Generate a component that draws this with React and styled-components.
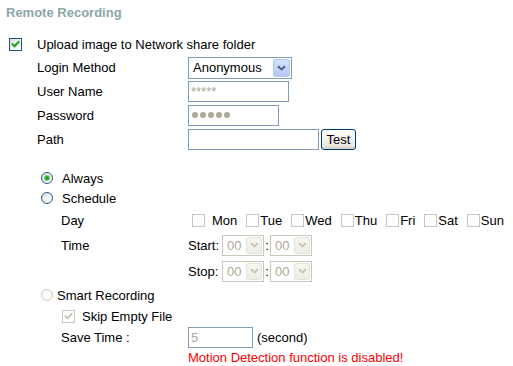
import React from 'react';
import styled, { createGlobalStyle } from 'styled-components';

const Global = createGlobalStyle`
  html, body { margin: 0; padding: 0; background: #fff; }
  body { font-family: "Liberation Sans", Arial, sans-serif; font-size: 13px; color: #000; }
`;

const Page = styled.div`
  width: 513px;
  height: 366px;
  overflow: hidden;
  background: #fff;
`;

const Title = styled.div`
  height: 33px;
  box-sizing: border-box;
  padding: 5px 0 0 6px;
  font-weight: bold;
  font-size: 13px;
  line-height: 16px;
  color: #8ca6a7;
`;

const Row = styled.div`
  display: flex;
  align-items: center;
  height: ${(p) => p.$h}px;
  padding-left: ${(p) => p.$indent || 0}px;
  box-sizing: border-box;
  white-space: nowrap;
  line-height: 15px;
`;

const Label = styled.span`
  flex: none;
  width: ${(p) => (p.$w ? `${p.$w}px` : 'auto')};
  margin-left: ${(p) => p.$ml || 0}px;
  color: ${(p) => p.$color || '#000'};
`;

const Box = styled.span`
  flex: none;
  width: 13px;
  height: 13px;
  box-sizing: border-box;
  border: 1px solid ${(p) => (p.$disabled ? '#cac8bb' : '#1c5180')};
  background: ${(p) =>
    p.$disabled ? '#fff' : 'linear-gradient(135deg, #dcdcd5 0%, #f3f3ef 55%, #ffffff 100%)'};
  display: flex;
  align-items: center;
  justify-content: center;
  margin-left: ${(p) => p.$ml || 0}px;
  margin-right: ${(p) => p.$mr || 0}px;
`;

const Check = ({ color }) => (
  <svg width="11" height="11" viewBox="0 0 11 11">
    <path d="M2.5 5.2 L4.5 7.3 L8.6 3" fill="none" stroke={color} strokeWidth="2" strokeLinecap="square" />
  </svg>
);

const CheckBox = ({ checked, disabled, ml, mr }) => (
  <Box $disabled={disabled} $ml={ml} $mr={mr}>
    {checked && <Check color={disabled ? '#cac8bb' : '#21a121'} />}
  </Box>
);

const RadioRing = styled.span`
  flex: none;
  width: 12px;
  height: 12px;
  border-radius: 50%;
  box-sizing: border-box;
  border: 1px solid ${(p) => (p.$disabled ? '#cfcdc2' : '#2c5a86')};
  background: ${(p) =>
    p.$disabled ? '#fbfbf9' : 'radial-gradient(circle at 70% 70%, #ffffff 0%, #eeeeea 55%, #d6d6ce 100%)'};
  display: flex;
  align-items: center;
  justify-content: center;
`;

const RadioDot = styled.span`
  width: 4px;
  height: 4px;
  border-radius: 50%;
  background: #24a324;
  box-shadow: 0 0 0 1px #74cf6f;
`;

const Radio = ({ checked, disabled }) => (
  <RadioRing $disabled={disabled}>{checked && <RadioDot />}</RadioRing>
);

const SelectBox = styled.div`
  flex: none;
  width: ${(p) => p.$w}px;
  height: ${(p) => p.$h}px;
  box-sizing: border-box;
  border: 1px solid ${(p) => (p.$disabled ? '#c9c7ba' : '#7f9db9')};
  background: #fff;
  padding: 1px;
  display: flex;
  align-items: stretch;
  color: ${(p) => (p.$disabled ? '#aca899' : '#000')};
`;

const SelectText = styled.span`
  flex: 1;
  padding-left: ${(p) => p.$pl}px;
  display: flex;
  align-items: center;
`;

const ArrowBtn = styled.span`
  flex: none;
  width: ${(p) => p.$w}px;
  box-sizing: border-box;
  border: 1px solid ${(p) => (p.$disabled ? '#e6e4da' : '#b5c8f2')};
  border-radius: 2px;
  background: ${(p) =>
    p.$disabled
      ? 'linear-gradient(#f6f5f1, #eeede7)'
      : 'linear-gradient(#d6e2fc 0%, #c3d4fb 50%, #b4c8f6 100%)'};
  display: flex;
  align-items: center;
  justify-content: center;
`;

const Chevron = ({ color }) => (
  <svg width="9" height="6" viewBox="0 0 9 6">
    <path d="M1 1.2 L4.5 4.5 L8 1.2" fill="none" stroke={color} strokeWidth="2" />
  </svg>
);

const Select = ({ value, w, h, disabled, pl = 3, btn = 17 }) => (
  <SelectBox $w={w} $h={h} $disabled={disabled}>
    <SelectText $pl={pl}>{value}</SelectText>
    <ArrowBtn $w={btn} $disabled={disabled}>
      <Chevron color={disabled ? '#c9c7ba' : '#4d6185'} />
    </ArrowBtn>
  </SelectBox>
);

const TextInput = styled.input`
  flex: none;
  width: ${(p) => p.$w}px;
  height: 21px;
  box-sizing: border-box;
  margin: 0;
  padding: 0 2px;
  border: 1px solid #7f9db9;
  background: #fff;
  font: 13px "Liberation Sans", Arial, sans-serif;
  color: ${(p) => (p.$muted ? '#aca899' : '#000')};
  outline: none;
`;

const PasswordField = styled.div`
  flex: none;
  width: ${(p) => p.$w}px;
  height: 21px;
  box-sizing: border-box;
  border: 1px solid #7f9db9;
  background: #fff;
  display: flex;
  align-items: center;
  gap: 2px;
  padding-left: 3px;
`;

const Dot = styled.span`
  width: 6px;
  height: 6px;
  border-radius: 50%;
  background: #aca899;
`;

const Button = styled.button`
  flex: none;
  width: 35px;
  height: 21px;
  margin: 0 0 0 2px;
  padding: 0;
  box-sizing: border-box;
  border: 1px solid #003c74;
  border-radius: 3px;
  background: linear-gradient(#ffffff 0%, #f5f4f0 45%, #e9e8e1 80%, #d6d0c5 100%);
  font: 13px "Liberation Sans", Arial, sans-serif;
  color: #000;
  line-height: 17px;
`;

const Days = styled.div`
  display: flex;
  align-items: center;
  gap: 9px;
  margin-left: 4px;
`;

const DayItem = styled.span`
  display: flex;
  align-items: center;
`;

const Colon = styled.span`
  width: 6px;
  text-align: center;
`;

const Note = styled.span`
  color: #ff0000;
`;

const days = ['Mon', 'Tue', 'Wed', 'Thu', 'Fri', 'Sat', 'Sun'];

const TimeSelects = () => (
  <>
    <Select value="00" w={42} h={21} disabled pl={3} btn={16} />
    <Colon>:</Colon>
    <Select value="00" w={42} h={21} disabled pl={3} btn={16} />
  </>
);

export default function App() {
  return (
    <Page>
      <Global />
      <Title>Remote Recording</Title>

      <Row $h={23} $indent={9}>
        <CheckBox checked />
        <Label $ml={15}>Upload image to Network share folder</Label>
      </Row>
      <Row $h={23} $indent={37}>
        <Label $w={151}>Login Method</Label>
        <Select value="Anonymous" w={104} h={22} />
      </Row>
      <Row $h={24} $indent={37}>
        <Label $w={151}>User Name</Label>
        <TextInput $w={101} $muted readOnly value="*****" />
      </Row>
      <Row $h={24} $indent={37}>
        <Label $w={151}>Password</Label>
        <PasswordField $w={91} aria-label="Password">
          <Dot />
          <Dot />
          <Dot />
          <Dot />
          <Dot />
        </PasswordField>
      </Row>
      <Row $h={24} $indent={37}>
        <Label $w={151}>Path</Label>
        <TextInput $w={131} readOnly value="" />
        <Button>Test</Button>
      </Row>

      <Row $h={17} />

      <Row $h={20} $indent={41}>
        <Radio checked />
        <Label $ml={9}>Always</Label>
      </Row>
      <Row $h={20} $indent={41}>
        <Radio />
        <Label $ml={9}>Schedule</Label>
      </Row>
      <Row $h={24} $indent={61}>
        <Label $w={127}>Day</Label>
        <Days>
          {days.map((d, i) => (
            <DayItem key={d}>
              <CheckBox disabled mr={i === 0 ? 7 : 1} />
              {d}
            </DayItem>
          ))}
        </Days>
      </Row>
      <Row $h={26} $indent={61}>
        <Label $w={127}>Time</Label>
        <Label $w={34}>Start:</Label>
        <TimeSelects />
      </Row>
      <Row $h={26} $indent={61}>
        <Label $w={127} />
        <Label $w={34}>Stop:</Label>
        <TimeSelects />
      </Row>
      <Row $h={22} $indent={41}>
        <Radio disabled />
        <Label $ml={4}>Smart Recording</Label>
      </Row>
      <Row $h={21} $indent={62}>
        <CheckBox checked disabled />
        <Label $ml={7}>Skip Empty File</Label>
      </Row>
      <Row $h={20} $indent={61}>
        <Label $w={127}>Save Time :</Label>
        <TextInput $w={65} $muted readOnly value="5" />
        <Label $ml={4}>(second)</Label>
      </Row>
      <Row $h={20} $indent={188}>
        <Note>Motion Detection function is disabled!</Note>
      </Row>
    </Page>
  );
}
